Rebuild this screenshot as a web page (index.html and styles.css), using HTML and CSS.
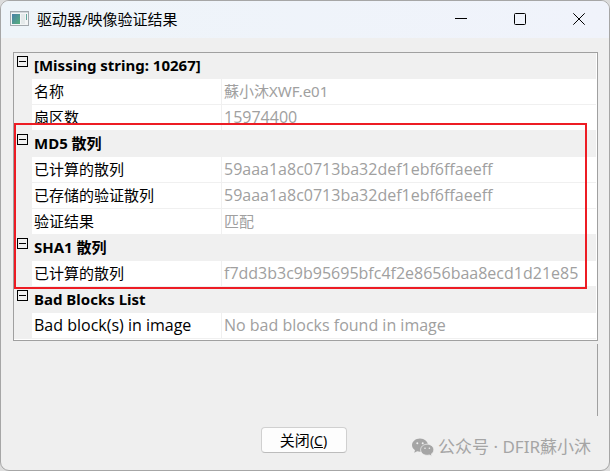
FILE: index.html
```
<!DOCTYPE html>
<html lang="zh-CN">
<head>
  <meta charset="UTF-8">
  <meta name="viewport" content="width=device-width, initial-scale=1.0">
  <title>驱动器/映像验证结果</title>
  <link rel="stylesheet" href="styles.css">
</head>
<body>
  <div class="window">
    <header class="titlebar">
      <svg class="app-icon" width="19" height="15" viewBox="0 0 19 15">
        <defs>
          <linearGradient id="screen" x1="0" y1="0" x2="1" y2="1">
            <stop offset="0" stop-color="#4a7fa8"/>
            <stop offset="1" stop-color="#56b07c"/>
          </linearGradient>
        </defs>
        <rect x="0.5" y="0.5" width="18" height="14" fill="#f3f5f6" stroke="#a3a9ae"/>
        <rect x="1" y="1" width="17" height="1" fill="#d3d8dc"/>
        <rect x="2" y="3" width="8" height="10" fill="url(#screen)"/>
        <rect x="11" y="3" width="4" height="10" fill="#e4e9ea"/>
        <rect x="16" y="3" width="1" height="6" fill="#63a79c"/>
      </svg>
      <h1 class="title">驱动器/映像验证结果</h1>
      <div class="window-buttons">
        <button class="window-button" aria-label="最小化">
          <svg width="12" height="12" viewBox="0 0 12 12"><path d="M0 5.5H12"/></svg>
        </button>
        <button class="window-button" aria-label="最大化">
          <svg width="12" height="12" viewBox="0 0 12 12"><rect x="0.5" y="0.5" width="11" height="11" rx="1"/></svg>
        </button>
        <button class="window-button" aria-label="关闭窗口">
          <svg width="12" height="12" viewBox="0 0 12 12"><path d="M0.3 0.3L11.7 11.7M11.7 0.3L0.3 11.7"/></svg>
        </button>
      </div>
    </header>

    <main class="content">
      <div class="grid">
        <table class="properties">
          <colgroup>
            <col class="col-toggle">
            <col class="col-name">
            <col>
          </colgroup>
          <tbody>
            <tr class="group">
              <td class="gutter"><button class="toggle" aria-label="折叠"></button></td>
              <th colspan="2">[Missing string: 10267]</th>
            </tr>
            <tr>
              <td class="gutter"></td>
              <th>名称</th>
              <td class="value">蘇小沐XWF.e01</td>
            </tr>
            <tr>
              <td class="gutter"></td>
              <th>扇区数</th>
              <td class="value latin">15974400</td>
            </tr>
          </tbody>
          <tbody>
            <tr class="group">
              <td class="gutter"><button class="toggle" aria-label="折叠"></button></td>
              <th colspan="2">MD5 散列</th>
            </tr>
            <tr>
              <td class="gutter"></td>
              <th>已计算的散列</th>
              <td class="value latin">59aaa1a8c0713ba32def1ebf6ffaeeff</td>
            </tr>
            <tr>
              <td class="gutter"></td>
              <th>已存储的验证散列</th>
              <td class="value latin">59aaa1a8c0713ba32def1ebf6ffaeeff</td>
            </tr>
            <tr>
              <td class="gutter"></td>
              <th>验证结果</th>
              <td class="value">匹配</td>
            </tr>
          </tbody>
          <tbody>
            <tr class="group">
              <td class="gutter"><button class="toggle" aria-label="折叠"></button></td>
              <th colspan="2">SHA1 散列</th>
            </tr>
            <tr>
              <td class="gutter"></td>
              <th>已计算的散列</th>
              <td class="value latin">f7dd3b3c9b95695bfc4f2e8656baa8ecd1d21e85</td>
            </tr>
          </tbody>
          <tbody>
            <tr class="group">
              <td class="gutter"><button class="toggle" aria-label="折叠"></button></td>
              <th colspan="2">Bad Blocks List</th>
            </tr>
            <tr>
              <td class="gutter"></td>
              <th class="latin">Bad block(s) in image</th>
              <td class="value latin">No bad blocks found in image</td>
            </tr>
          </tbody>
        </table>
        <div class="highlight"></div>
      </div>

      <div class="description"></div>

      <footer class="actions">
        <button class="close-button" accesskey="c">关闭<span class="accel">(<u>C</u>)</span></button>
      </footer>
    </main>

    <div class="watermark">
      <svg width="22" height="19" viewBox="0 0 22 19">
        <path fill="#a5a5a5" d="M8 0.5C3.6 0.5 0 3.4 0 7.1c0 2.1 1.1 3.9 3 5.1l-0.8 2.6 3-1.5c0.9 0.2 1.8 0.4 2.8 0.4 4.4 0 8-3 8-6.6S12.4 0.5 8 0.5z"/>
        <circle cx="5.3" cy="5.2" r="1" fill="#efefef"/>
        <circle cx="10.7" cy="5.2" r="1" fill="#efefef"/>
        <path fill="#a5a5a5" stroke="#efefef" stroke-width="0.8" d="M15.2 6.2c-3.7 0-6.6 2.5-6.6 5.6s2.9 5.5 6.6 5.5c0.8 0 1.5-0.1 2.2-0.3l2.5 1.3-0.6-2.2c1.5-1 2.5-2.5 2.5-4.3 0-3.1-2.9-5.6-6.6-5.6z"/>
        <circle cx="13" cy="10.3" r="0.8" fill="#efefef"/>
        <circle cx="17.4" cy="10.3" r="0.8" fill="#efefef"/>
      </svg>
      <span>公众号 · DFIR蘇小沐</span>
    </div>
  </div>
</body>
</html>
```
FILE: styles.css
```
* {
  box-sizing: border-box;
}

body {
  margin: 0;
  background: #dcdcdc;
  font-family: "Noto Sans", "Noto Sans CJK SC", sans-serif;
  font-size: 15px;
  color: black;
}

button {
  font-family: inherit;
  font-size: inherit;
  color: inherit;
}

.window {
  position: relative;
  display: flex;
  flex-direction: column;
  min-height: 100vh;
  background: #efefef;
  border: 1px solid #a6a6a6;
  border-radius: 9px;
  overflow: hidden;
}

/* title bar */

.titlebar {
  display: flex;
  align-items: center;
  height: 37px;
  padding: 0 1px 2px 9px;
  background: linear-gradient(to right, #eef4f9, #f0f3fb);
}

.app-icon {
  flex: none;
}

.title {
  flex: 1;
  margin: 0 0 0 8px;
  font-size: 15px;
  font-weight: normal;
  line-height: 20px;
}

.window-buttons {
  display: flex;
  gap: 1px;
  align-self: flex-start;
}

.window-button {
  display: flex;
  align-items: center;
  justify-content: center;
  width: 58px;
  height: 36px;
  padding: 0;
  border: 0;
  background: none;
}

.window-button svg {
  fill: none;
  stroke: black;
  stroke-width: 1;
}

/* property grid */

.content {
  flex: 1;
  display: flex;
  flex-direction: column;
  padding: 14px 11px 17px 12px;
}

.grid {
  position: relative;
  padding: 0 1px 1px 0;
  background: white;
  border: 1px solid #a0a0a0;
}

.properties {
  width: 100%;
  table-layout: fixed;
  border-spacing: 0;
}

.col-toggle {
  width: 18px;
}

.col-name {
  width: 190px;
}

.properties th,
.properties td {
  height: 26px;
  padding: 0 2px;
  line-height: 25px;
  font-weight: normal;
  text-align: left;
  white-space: nowrap;
  border-bottom: 1px solid #f0f0f0;
}

.properties th {
  border-right: 1px solid #f0f0f0;
}

.properties .value {
  color: #a0a0a0;
}

.properties .latin {
  font-family: "Open Sans", sans-serif;
  font-size: 16px;
}

.properties .group th {
  font-weight: bold;
  background: #f0f0f0;
}

.properties .gutter {
  padding: 3px 3px 0;
  vertical-align: top;
  line-height: 0;
  background: #f0f0f0;
}

.toggle {
  display: block;
  width: 11px;
  height: 11px;
  padding: 0;
  border: 1px solid black;
  background: linear-gradient(black, black) center / 7px 1px no-repeat;
}

.highlight {
  position: absolute;
  top: 70px;
  left: 0;
  right: 10px;
  height: 166px;
  border: 2px solid #ed1c24;
  pointer-events: none;
}

/* empty help pane under the grid */

.description {
  flex: 1;
  margin: 3px 0 11px;
  border-right: 1px solid #a0a0a0;
}

.actions {
  display: flex;
  justify-content: center;
  padding-right: 4px;
}

.close-button {
  width: 86px;
  height: 26px;
  padding: 0;
  font-size: 15px;
  line-height: 24px;
  background: #fdfdfd;
  border: 1px solid #d0d0d0;
  border-bottom-color: #bcbcbc;
  border-radius: 4px;
}

.accel {
  font-size: 14px;
}

.watermark {
  position: absolute;
  right: 18px;
  bottom: 11px;
  display: flex;
  align-items: center;
  gap: 4px;
  font-size: 17px;
  line-height: 24px;
  color: #a5a5a5;
}
```
